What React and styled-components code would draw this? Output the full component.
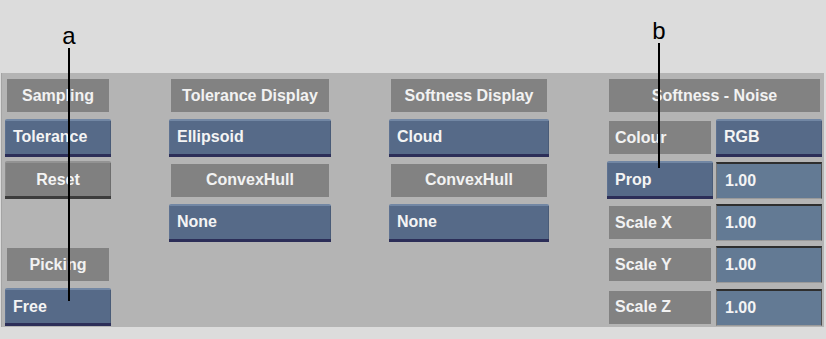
import React from 'react';
import styled, { createGlobalStyle } from 'styled-components';

const GlobalStyle = createGlobalStyle`
  html, body {
    margin: 0;
    padding: 0;
    background: #dcdcdc;
  }
  body {
    font-family: "Liberation Sans", Arial, sans-serif;
  }
`;

const Page = styled.div`
  position: relative;
  width: 826px;
  height: 339px;
  background: #dcdcdc;
  overflow: hidden;
  padding-top: 73px;
  box-sizing: border-box;
`;

const Panel = styled.div`
  margin-left: 1px;
  width: 823px;
  height: 254px;
  box-sizing: border-box;
  background: #b4b4b4;
  border-left: 1px solid #a4a4a4;
  padding: 1.5px 0 0 3px;
  display: grid;
  grid-template-columns: 106px 162px 160px 215px;
  column-gap: 58px;
`;

const Column = styled.div`
  display: grid;
  grid-auto-rows: 42.3px;
  align-items: center;
`;

const Pair = styled.div`
  display: grid;
  grid-template-columns: 106px 106px;
  column-gap: 3px;
  align-items: center;
`;

const Label = styled.div`
  height: 33px;
  margin: 0 2px;
  box-sizing: border-box;
  background: #828282;
  color: #f2f2f2;
  font-size: 16px;
  font-weight: bold;
  display: flex;
  align-items: center;
  justify-content: ${(p) => (p.$left ? 'flex-start' : 'center')};
  padding: 0 ${(p) => (p.$left ? '6px' : '0')};
  white-space: nowrap;
`;

const Button = styled.div`
  height: 38px;
  box-sizing: border-box;
  background: ${(p) => (p.$gray ? '#808080' : '#566a88')};
  border-top: 2px solid ${(p) => (p.$gray ? '#939393' : '#7287a4')};
  border-bottom: 3px solid ${(p) => (p.$gray ? '#3c3c3c' : '#2c2e58')};
  box-shadow: inset -1px 0 0 ${(p) => (p.$gray ? '#6e6e6e' : '#4a5c78')},
    inset 1px 0 0 ${(p) => (p.$gray ? '#8a8a8a' : '#5e7291')};
  border-radius: 2px 2px 0 0;
  color: #f4f4f4;
  font-size: 16px;
  font-weight: bold;
  display: flex;
  align-items: center;
  justify-content: ${(p) => (p.$gray ? 'center' : 'flex-start')};
  padding: 0 8px;
  white-space: nowrap;
`;

const Field = styled.div`
  height: 37px;
  box-sizing: border-box;
  background: #637a94;
  border-top: 2px solid #2e2e2e;
  border-left: 1px solid #7a7a7a;
  border-right: 1px solid #4e4e4e;
  border-bottom: 1px solid #9a9a9a;
  color: #f4f4f4;
  font-size: 16px;
  font-weight: bold;
  display: flex;
  align-items: center;
  padding: 0 8px;
`;

const Spacer = styled.div``;

const Callout = styled.div`
  position: absolute;
  left: ${(p) => p.$x}px;
  top: ${(p) => p.$top}px;
  width: 24px;
  margin-left: -12px;
  display: flex;
  flex-direction: column;
  align-items: center;
  pointer-events: none;
`;

const CalloutLetter = styled.span`
  font-family: "Liberation Sans", Arial, sans-serif;
  font-size: 24px;
  line-height: 24px;
  color: #000;
`;

const CalloutLine = styled.div`
  width: 2px;
  height: ${(p) => p.$len}px;
  margin-top: ${(p) => p.$gap}px;
  background: #000;
`;

const ValueRow = ({ label, button, value }) => (
  <Pair>
    {button ? <Button>{button}</Button> : <Label $left>{label}</Label>}
    {value ? <Field>{value}</Field> : null}
  </Pair>
);

const App = () => {
  return (
    <>
      <GlobalStyle />
      <Page>
        <Panel>
          <Column>
            <Label>Sampling</Label>
            <Button>Tolerance</Button>
            <Button $gray>Reset</Button>
            <Spacer />
            <Label>Picking</Label>
            <Button>Free</Button>
          </Column>

          <Column>
            <Label>Tolerance Display</Label>
            <Button>Ellipsoid</Button>
            <Label>ConvexHull</Label>
            <Button>None</Button>
          </Column>

          <Column>
            <Label>Softness Display</Label>
            <Button>Cloud</Button>
            <Label>ConvexHull</Label>
            <Button>None</Button>
          </Column>

          <Column>
            <Label>Softness - Noise</Label>
            <Pair>
              <Label $left>Colour</Label>
              <Button>RGB</Button>
            </Pair>
            <ValueRow button="Prop" value="1.00" />
            <ValueRow label="Scale X" value="1.00" />
            <ValueRow label="Scale Y" value="1.00" />
            <ValueRow label="Scale Z" value="1.00" />
          </Column>
        </Panel>

        <Callout $x={69} $top={24}>
          <CalloutLetter>a</CalloutLetter>
          <CalloutLine $len={253} $gap={0} />
        </Callout>
        <Callout $x={659} $top={19}>
          <CalloutLetter>b</CalloutLetter>
          <CalloutLine $len={125} $gap={0} />
        </Callout>
      </Page>
    </>
  );
};

export default App;
